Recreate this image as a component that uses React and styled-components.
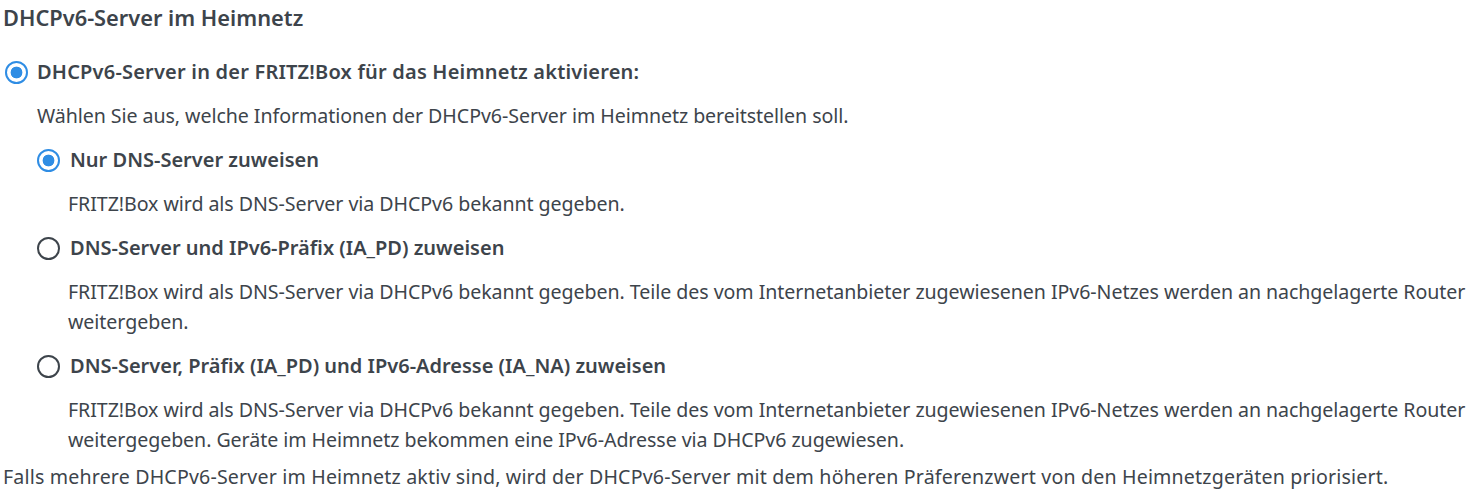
import React from "react";
import styled, { createGlobalStyle } from "styled-components";

const GlobalStyle = createGlobalStyle`
  html, body { margin: 0; padding: 0; background: #ffffff; }
  body {
    font-family: "Noto Sans", "Open Sans", sans-serif;
    color: #3d444b;
  }
`;

const Page = styled.div`
  display: flex;
  flex-direction: column;
  padding: 3px 3px;
`;

const Title = styled.h2`
  margin: 0 0 24px 0;
  font-size: 21.8px;
  line-height: 30px;
  font-weight: 600;
  color: #3d444b;
`;

const Option = styled.div`
  display: flex;
  flex-direction: column;
`;

const RadioRow = styled.label`
  display: flex;
  align-items: center;
  gap: ${(p) => (p.$sub ? "10px" : "9px")};
  padding-left: ${(p) => (p.$sub ? "0" : "2px")};
  height: 30px;
  cursor: pointer;
`;

const Radio = styled.input.attrs({ type: "radio" })`
  appearance: none;
  -webkit-appearance: none;
  margin: 0;
  flex: 0 0 auto;
  width: 23px;
  height: 23px;
  border-radius: 50%;
  box-sizing: border-box;
  border: 2.5px solid ${(p) => (p.checked ? "#2f8de4" : "#3d444b")};
  background: ${(p) =>
    p.checked
      ? "radial-gradient(circle, #2f8de4 0 5.6px, #ffffff 6.2px)"
      : "#ffffff"};
`;

const LabelText = styled.span`
  font-size: 20px;
  line-height: 30px;
  font-weight: 600;
  letter-spacing: ${(p) => (p.$wide ? "0.2px" : "0")};
  color: #3d444b;
`;

const Body = styled.div`
  display: flex;
  flex-direction: column;
  gap: 14px;
  margin-top: 14px;
  padding-left: 34px;
`;

const Text = styled.p`
  margin: 0;
  font-size: 19.6px;
  line-height: 30px;
  font-weight: 400;
  letter-spacing: -0.06px;
  color: #3d444b;
  padding-left: ${(p) => p.$indent || 0}px;
`;

const Footer = styled(Text)`
  margin-top: 7px;
  letter-spacing: 0.17px;
`;

const subOptions = [
  {
    id: "dns",
    label: "Nur DNS-Server zuweisen",
    text: "FRITZ!Box wird als DNS-Server via DHCPv6 bekannt gegeben.",
    checked: true,
  },
  {
    id: "pd",
    label: "DNS-Server und IPv6-Präfix (IA_PD) zuweisen",
    text:
      "FRITZ!Box wird als DNS-Server via DHCPv6 bekannt gegeben. Teile des vom Internetanbieter zugewiesenen IPv6-Netzes werden an nachgelagerte Router weitergeben.",
    checked: false,
  },
  {
    id: "na",
    label: "DNS-Server, Präfix (IA_PD) und IPv6-Adresse (IA_NA) zuweisen",
    text:
      "FRITZ!Box wird als DNS-Server via DHCPv6 bekannt gegeben. Teile des vom Internetanbieter zugewiesenen IPv6-Netzes werden an nachgelagerte Router weitergegeben. Geräte im Heimnetz bekommen eine IPv6-Adresse via DHCPv6 zugewiesen.",
    checked: false,
  },
];

const SubOption = styled.div`
  display: flex;
  flex-direction: column;
  gap: 14px;
`;

export default function App() {
  return (
    <>
      <GlobalStyle />
      <Page>
        <Title>DHCPv6-Server im Heimnetz</Title>
        <Option>
          <RadioRow>
            <Radio name="server" checked readOnly />
            <LabelText $wide>DHCPv6-Server in der FRITZ!Box für das Heimnetz aktivieren:</LabelText>
          </RadioRow>
          <Body>
            <Text>Wählen Sie aus, welche Informationen der DHCPv6-Server im Heimnetz bereitstellen soll.</Text>
            {subOptions.map((o) => (
              <SubOption key={o.id}>
                <RadioRow $sub>
                  <Radio name="mode" checked={o.checked} readOnly />
                  <LabelText>{o.label}</LabelText>
                </RadioRow>
                <Text $indent={31}>{o.text}</Text>
              </SubOption>
            ))}
          </Body>
        </Option>
        <Footer>
          Falls mehrere DHCPv6-Server im Heimnetz aktiv sind, wird der DHCPv6-Server mit dem höheren Präferenzwert von den Heimnetzgeräten priorisiert.
        </Footer>
      </Page>
    </>
  );
}
